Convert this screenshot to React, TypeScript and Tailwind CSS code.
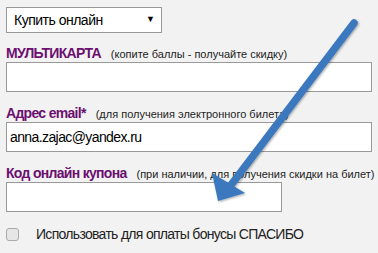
import { useState } from "react";

function Label({ title, hint }: { title: string; hint: string }) {
  return (
    <div className="flex h-[17px] items-baseline gap-[10px] whitespace-nowrap">
      <span className="text-[14px] font-bold leading-[17px] tracking-[-0.7px] text-[#6c0f70]">{title}</span>
      <span className="text-[11px] leading-[17px] text-[#222]">{hint}</span>
    </div>
  );
}

export default function App() {
  const [email, setEmail] = useState("anna.zajac@yandex.ru");

  return (
    <div className="relative h-[253px] w-[378px] overflow-hidden bg-[#f2f2f2] font-['Liberation_Sans',Arial,sans-serif]">
      <div className="flex flex-col px-[6px] pt-[7px]">
        <div className="flex h-[26px] w-[156px] items-center justify-between border border-[#999] bg-white pl-[7px] pr-[6px]">
          <span className="text-[14px] tracking-[-0.5px] text-black">Купить онлайн</span>
          <span className="text-[9px] text-black">▼</span>
        </div>

        <div className="mt-[12px]">
          <Label title="МУЛЬТИКАРТА" hint="(копите баллы - получайте скидку)" />
        </div>
        <input className="h-[30px] w-[366px] border border-[#999] bg-white px-[3px] text-[14px] tracking-[-0.6px] outline-none" />

        <div className="mt-[13px]">
          <Label title="Адрес email*" hint="(для получения электронного билета)" />
        </div>
        <input
          value={email}
          onChange={(e) => setEmail(e.target.value)}
          className="h-[30px] w-[366px] border border-[#999] bg-white px-[3px] text-[14px] tracking-[-0.6px] text-black outline-none"
        />

        <div className="mt-[13px]">
          <Label title="Код онлайн купона" hint="(при наличии, для получения скидки на билет)" />
        </div>
        <input className="h-[30px] w-[276px] border border-[#999] bg-white px-[3px] text-[14px] tracking-[-0.6px] outline-none" />

        <label className="mt-[13px] flex h-[18px] items-center">
          <span className="h-[13px] w-[13px] rounded-[3px] border border-[#aaa] bg-[#e6e6e6]" />
          <span className="ml-[17px] text-[14px] leading-[18px] tracking-[-0.7px] text-[#222]">
            Использовать для оплаты бонусы СПАСИБО
          </span>
        </label>
      </div>

      <svg className="pointer-events-none absolute inset-0" width="378" height="253" viewBox="0 0 378 253">
        <defs>
          <filter id="sh" x="-20%" y="-20%" width="140%" height="140%">
            <feDropShadow dx="1" dy="1" stdDeviation="1" floodColor="#000" floodOpacity="0.35" />
          </filter>
        </defs>
        <g filter="url(#sh)" fill="#3b78bd">
          <line x1="354" y1="23" x2="231" y2="185" stroke="#3b78bd" strokeWidth="7.5" strokeLinecap="round" />
          <polygon points="218,201 212,173 245,193" />
        </g>
      </svg>
    </div>
  );
}
